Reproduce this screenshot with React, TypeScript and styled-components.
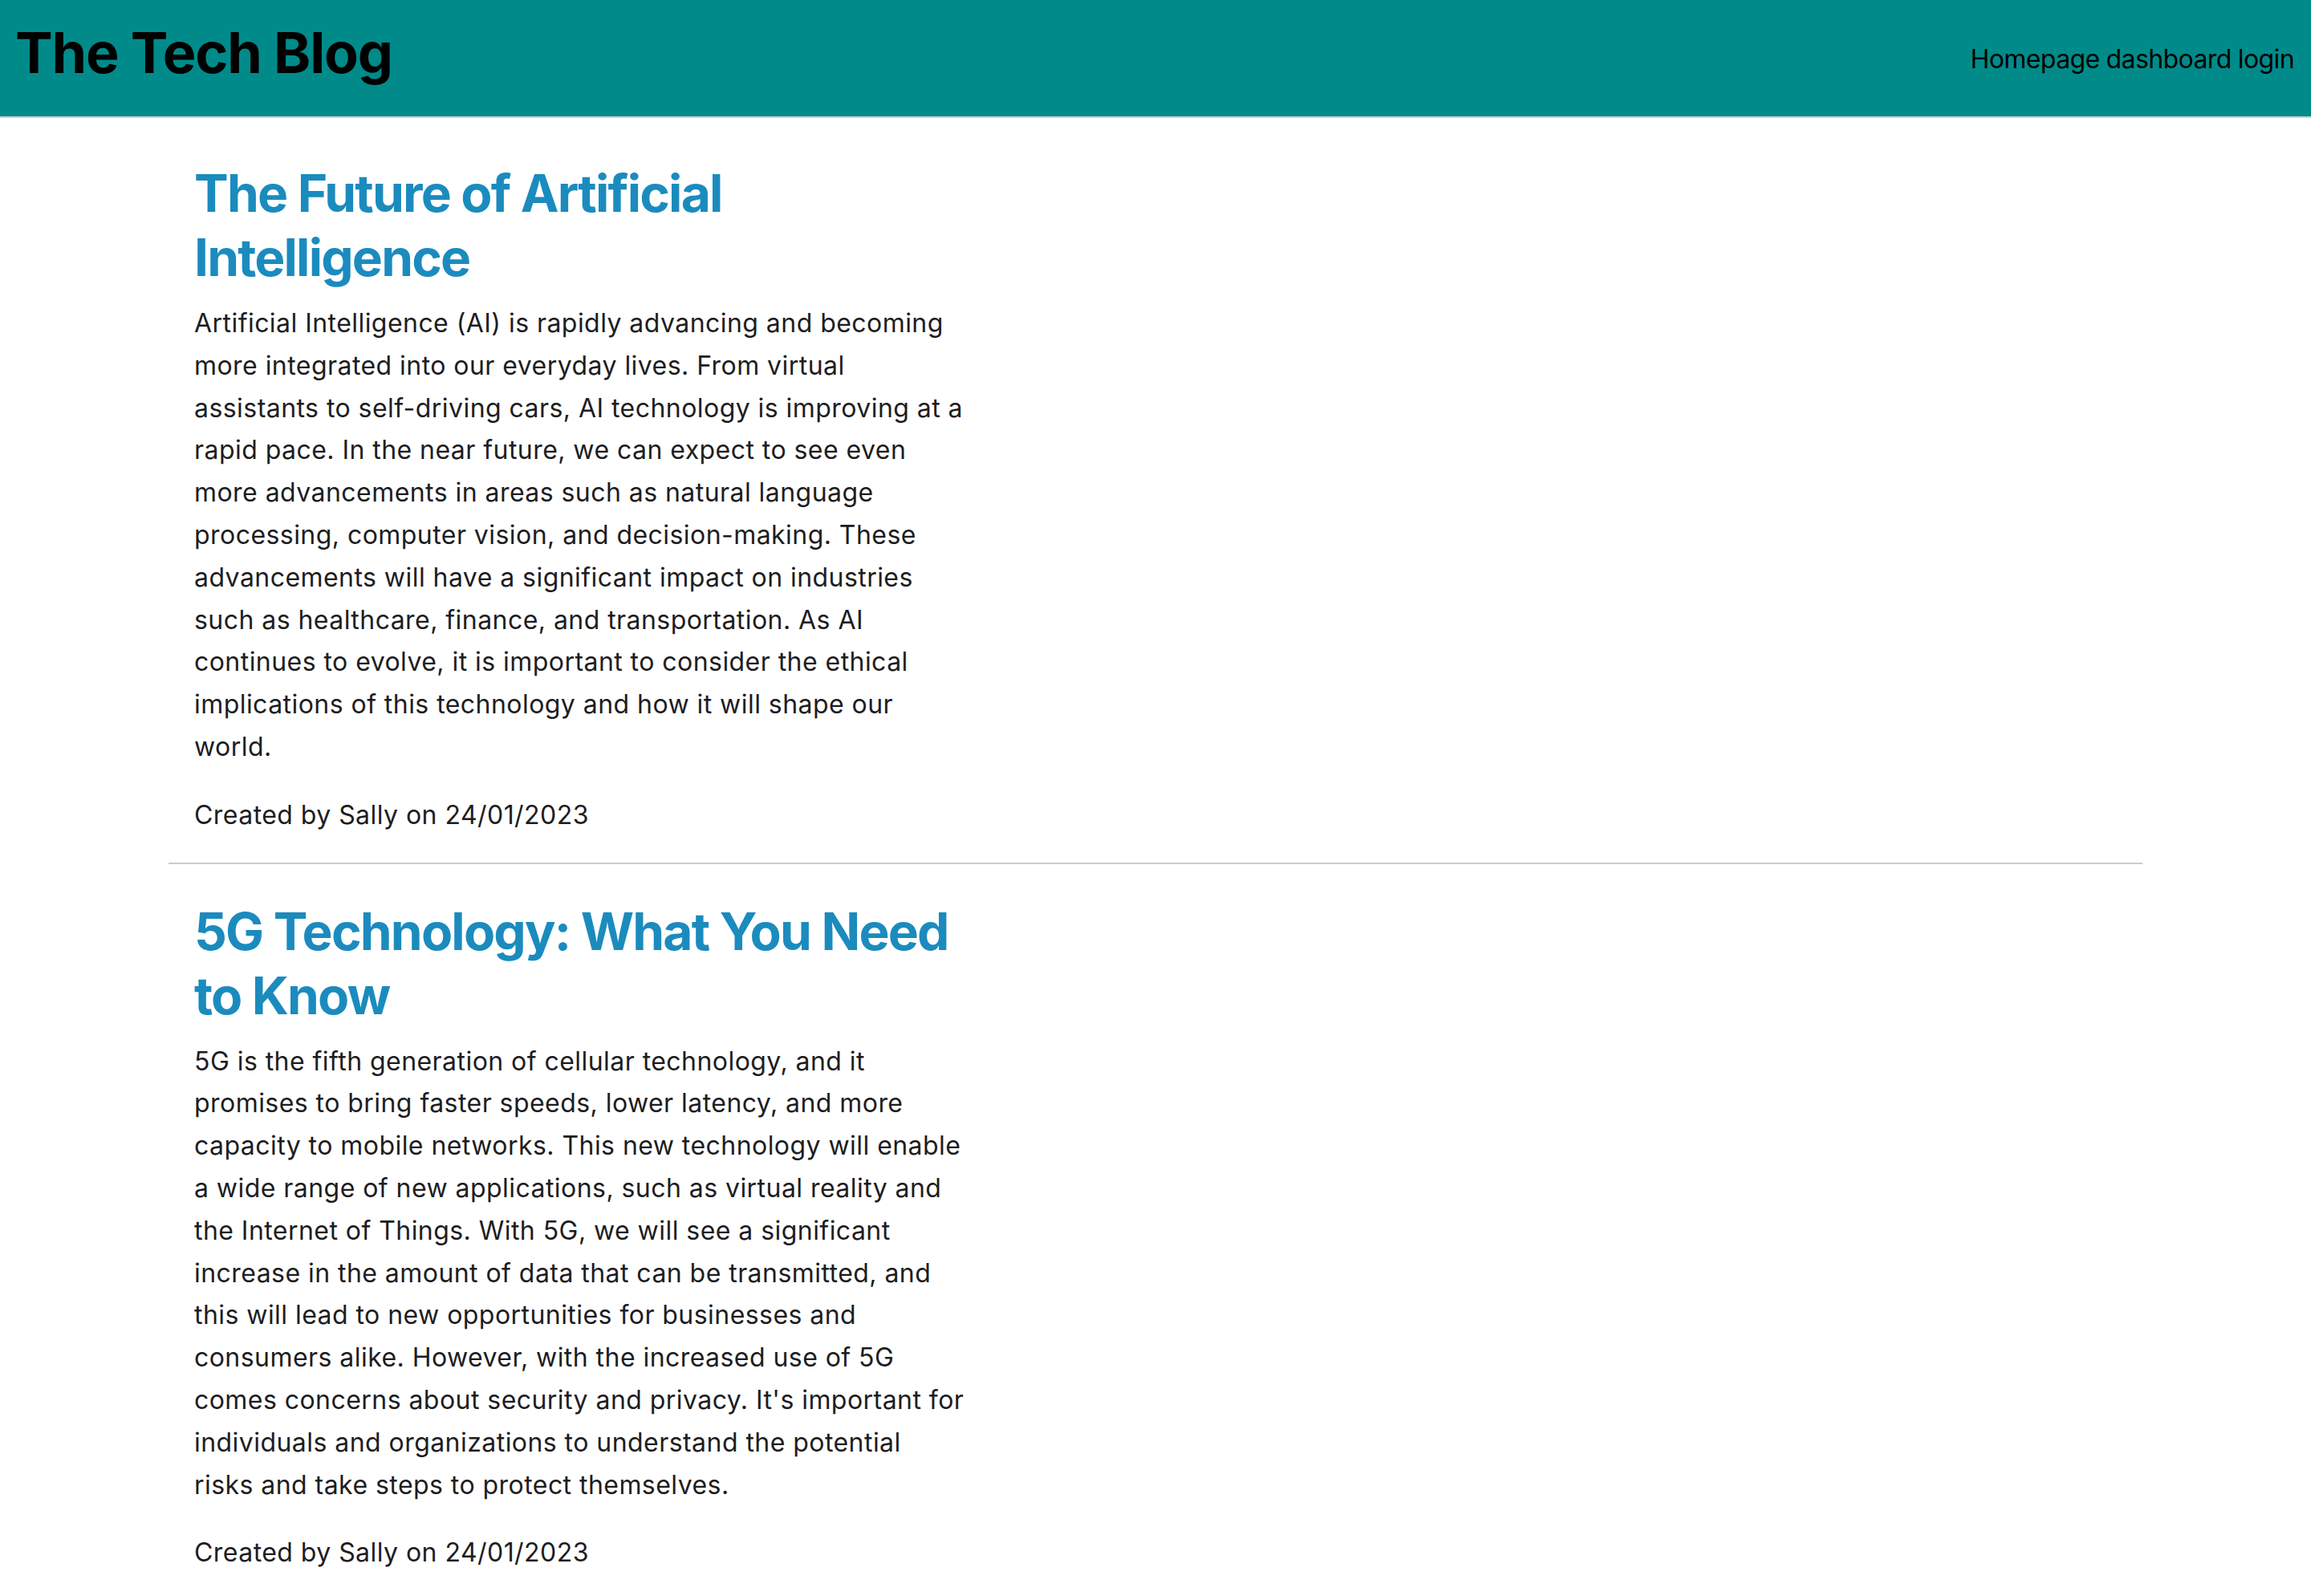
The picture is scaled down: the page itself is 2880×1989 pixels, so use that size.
import React from "react";
import styled, { createGlobalStyle } from "styled-components";

const GlobalStyle = createGlobalStyle`
  html, body {
    margin: 0;
    padding: 0;
    background: #ffffff;
  }
  body {
    font-family: Inter, "Noto Sans", "Liberation Sans", sans-serif;
    color: #1d1d1f;
  }
  * { box-sizing: border-box; }
`;

const Header = styled.header`
  display: flex;
  justify-content: space-between;
  align-items: flex-start;
  height: 147px;
  padding: 0 21px 0 19px;
  background: #008b8a;
  border-bottom: 2px solid #d0d0d0;
`;

const Brand = styled.h1`
  margin: 31px 0 0;
  font-size: 70px;
  line-height: 70px;
  font-weight: 700;
  letter-spacing: -1.2px;
  color: #000000;
`;

const Nav = styled.nav`
  display: flex;
  gap: 8px;
  margin-top: 58px;
`;

const NavLink = styled.a`
  font-size: 32px;
  line-height: 32px;
  letter-spacing: -0.6px;
  color: #000000;
  text-decoration: none;
`;

const Main = styled.main`
  width: 2460px;
  margin: 0 auto;
  padding-top: 10px;
`;

const Article = styled.article`
  padding: 44px 32px 32px;
  border-bottom: 2px solid #cccccc;
`;

const Column = styled.div`
  width: 961px;
`;

const Title = styled.h2`
  margin: 0;
  font-size: 64px;
  line-height: 80px;
  font-weight: 700;
  letter-spacing: -1.8px;
  color: #1b8bbe;
`;

const Body = styled.p`
  margin: 16px 0 0;
  font-size: 32px;
  line-height: 52.8px;
  letter-spacing: 0.45px;
  color: #1d1d1f;
`;

const Meta = styled.p`
  margin: 32px 0 0;
  font-size: 32px;
  line-height: 52.8px;
  letter-spacing: 0.45px;
  color: #1d1d1f;
`;

const posts = [
  {
    title: "The Future of Artificial Intelligence",
    body:
      "Artificial Intelligence (AI) is rapidly advancing and becoming more integrated into our everyday lives. From virtual assistants to self-driving cars, AI technology is improving at a rapid pace. In the near future, we can expect to see even more advancements in areas such as natural language processing, computer vision, and decision-making. These advancements will have a significant impact on industries such as healthcare, finance, and transportation. As AI continues to evolve, it is important to consider the ethical implications of this technology and how it will shape our world.",
    author: "Sally",
    date: "24/01/2023",
  },
  {
    title: "5G Technology: What You Need to Know",
    body:
      "5G is the fifth generation of cellular technology, and it promises to bring faster speeds, lower latency, and more capacity to mobile networks. This new technology will enable a wide range of new applications, such as virtual reality and the Internet of Things. With 5G, we will see a significant increase in the amount of data that can be transmitted, and this will lead to new opportunities for businesses and consumers alike. However, with the increased use of 5G comes concerns about security and privacy. It's important for individuals and organizations to understand the potential risks and take steps to protect themselves.",
    author: "Sally",
    date: "24/01/2023",
  },
];

export default function App() {
  return (
    <>
      <GlobalStyle />
      <Header>
        <Brand>The Tech Blog</Brand>
        <Nav>
          <NavLink href="#">Homepage</NavLink>
          <NavLink href="#">dashboard</NavLink>
          <NavLink href="#">login</NavLink>
        </Nav>
      </Header>
      <Main>
        {posts.map((p) => (
          <Article key={p.title}>
            <Column>
              <Title>{p.title}</Title>
              <Body>{p.body}</Body>
              <Meta>
                Created by {p.author} on {p.date}
              </Meta>
            </Column>
          </Article>
        ))}
      </Main>
    </>
  );
}
